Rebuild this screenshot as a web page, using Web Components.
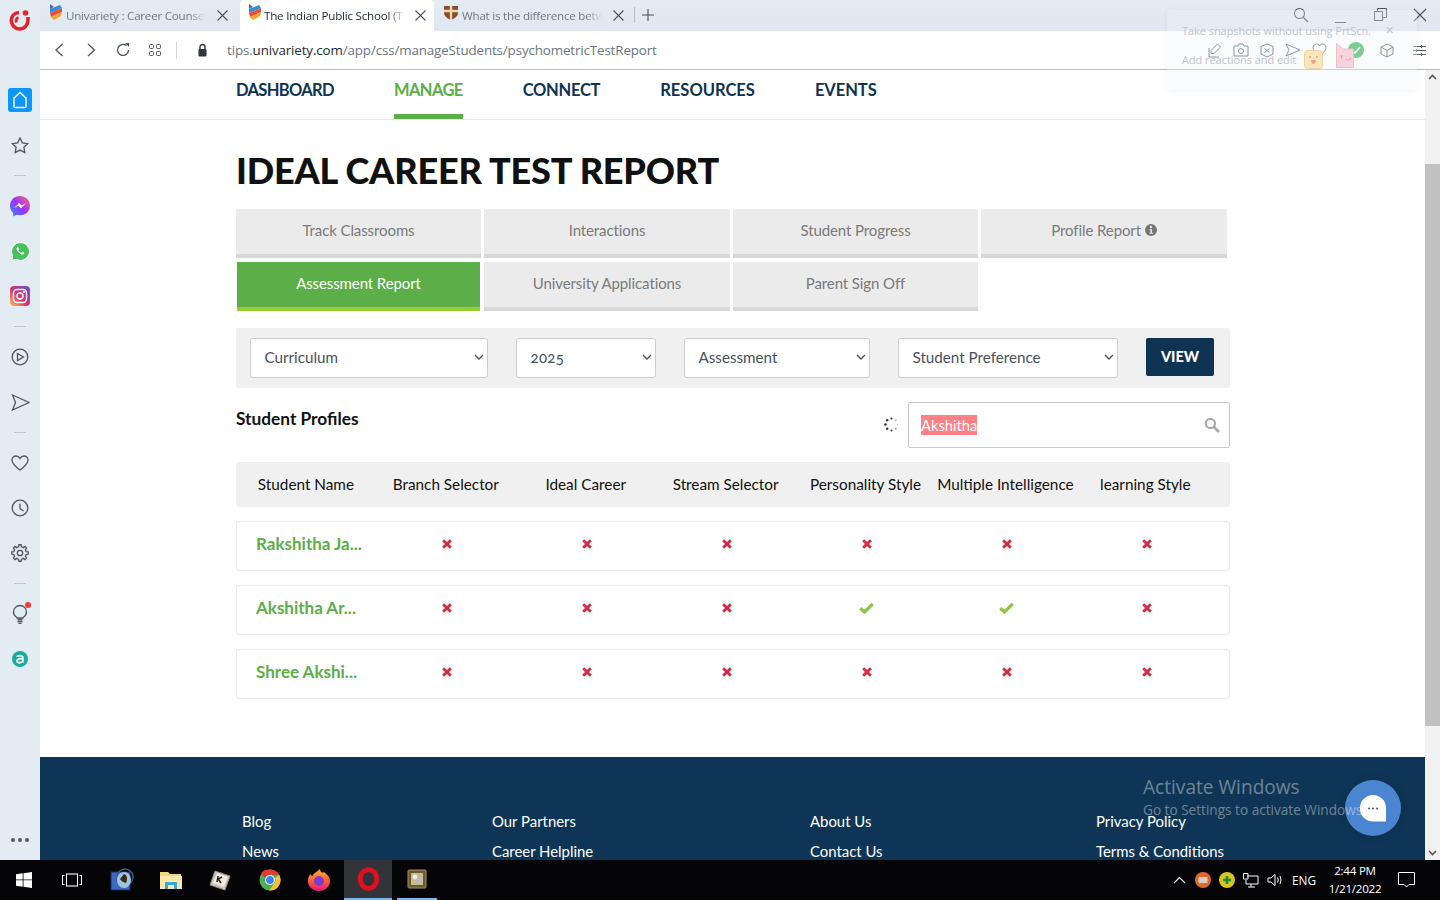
<!DOCTYPE html>
<html lang="en"><head><meta charset="utf-8"><title>Ideal Career Test Report</title>
<style>
html,body{margin:0;padding:0;height:100%;overflow:hidden}
body{font-family:"Lato","Open Sans",sans-serif;background:#e3ebf3}
</style></head><body>
<desk-app></desk-app>
<script>
function def(name, css, html){
  customElements.define(name, class extends HTMLElement{
    constructor(){super();const r=this.attachShadow({mode:'open'});
      r.innerHTML='<style>'+css+'</style>'+(typeof html==='function'?html(this):html);}
  });
}
function gear(cx,cy,ro,ri,n){
  let d='';const st=Math.PI*2/n;
  for(let i=0;i<n;i++){
    const a=i*st-Math.PI/2;
    const p=[[ri,a-st*.5],[ri,a-st*.3],[ro,a-st*.17],[ro,a+st*.17],[ri,a+st*.3]];
    p.forEach((q,j)=>{d+=((i===0&&j===0)?'M':'L')+(cx+q[0]*Math.cos(q[1])).toFixed(2)+' '+(cy+q[0]*Math.sin(q[1])).toFixed(2);});
  }
  return d+'Z';
}
const X='<svg width="10" height="10" viewBox="0 0 10 10"><path d="M1.200 1.200 8.800 8.800M8.800 1.200 1.200 8.800" stroke="#d62a45" stroke-width="2.900" fill="none"/></svg>';
const CHECK='<svg width="15" height="12" viewBox="0 0 15 12"><path d="M1.200 6.200 5.500 10 13.800 1.800" stroke="#8cc63f" stroke-width="3.200" fill="none"/></svg>';
const FAV='<svg width="14" height="16" viewBox="0 0 14 16"><path d="M1 0 5 3 1 5Z" fill="#5a5fb0"/><path d="M1 5 11 1 13 4 1 9Z" fill="#2d8fd5"/><path d="M1 9 13 4 13 8 2 13Z" fill="#ef4b3d"/><path d="M2 13 13 8 12 12 5 16Z" fill="#f5a623"/></svg>';
const SHIELD='<svg width="16" height="15" viewBox="0 0 16 15"><path d="M1 1H15V8Q15 12 8 15 1 12 1 8Z" fill="#8a4b2a"/><path d="M8 1V15M1 6H15" stroke="#e9d9b0" stroke-width="2.400"/></svg>';

def('browser-tab',`
:host{display:flex;align-items:center;height:31px;box-sizing:border-box;width:var(--w,200px);padding:0 var(--pr,12px) 0 var(--pl,8px);gap:var(--g,2px);color:#6f7a85;font:11.600px/31px "Open Sans",sans-serif;letter-spacing:-.22px;position:relative;flex:none}
:host([active]){background:#fff;color:#1f2a36;border-radius:4px 4px 0 0}
.t{flex:1;min-width:0;white-space:nowrap;overflow:hidden;-webkit-mask-image:linear-gradient(90deg,#000 88%,transparent);mask-image:linear-gradient(90deg,#000 88%,transparent)}
svg.c{flex:none;margin-left:8px}
span.i{display:flex;flex:none}
`,`<span class="i"><slot name="icon"></slot></span><span class="t"><slot></slot></span><svg class="c" width="11" height="11" viewBox="0 0 11 11"><path d="M.5.5l10 10M10.500.5l-10 10" stroke="#4a5560" stroke-width="1.100" fill="none"/></svg>`);

def('tab-strip',`
:host{display:flex;align-items:flex-start;height:31px;background:linear-gradient(#e3ebf3,#dfe7f0);position:relative}
.sep{width:1px;height:16px;background:#b5bec8;margin:7px 0 0 0;flex:none}
.plus{margin:9px 0 0 7px;flex:none}
.win{margin-left:auto;display:flex;align-items:center;height:29px}
.win svg{display:block;flex:none}
.s{margin-right:25px}.m{margin-right:27px}.r{margin-right:26px}.x{margin-right:13px}
`,`<browser-tab style="--pl:9px;--g:3px"><span slot="icon">${FAV}</span>Univariety : Career Counsell</browser-tab>
<browser-tab active style="--w:194px;--pr:8px"><span slot="icon">${FAV}</span>The Indian Public School (T</browser-tab>
<browser-tab style="--pr:10px;--pl:9px;--g:3px"><span slot="icon">${SHIELD}</span>What is the difference betw</browser-tab>
<div class="sep"></div>
<svg class="plus" width="12" height="12" viewBox="0 0 12 12"><path d="M6 0V12M0 6H12" stroke="#4a5560" stroke-width="1.100"/></svg>
<div class="win">
<svg class="s" width="16" height="16" viewBox="0 0 16 16"><circle cx="6.500" cy="6.500" r="5" stroke="#4a5560" stroke-width="1.100" fill="none"/><path d="M10 10l5 5" stroke="#4a5560" stroke-width="1.200"/></svg>
<svg class="m" width="13" height="13" viewBox="0 0 13 13" style="margin-top:4px"><path d="M1 12.500H12" stroke="#4a5560"/></svg>
<svg class="r" width="13" height="13" viewBox="0 0 13 13"><path d="M.5 3.500H8.500V12.500H.5ZM3.500 3.500V.5H12.500V9.500H8.500" stroke="#4a5560" fill="none"/></svg>
<svg class="x" width="14" height="14" viewBox="0 0 14 14"><path d="M1 1l12 12M13 1 1 13" stroke="#4a5560" stroke-width="1.100"/></svg>
</div>`);

def('url-bar',`
:host{display:flex;align-items:center;height:39px;box-sizing:border-box;background:#fff;border-bottom:1px solid #b9bdc1;padding-left:13px;position:relative}
svg{display:block;flex:none}
.u{font:13.350px/18px "Open Sans",sans-serif;color:#6a7681;margin:0 0 0 19px;letter-spacing:-.12px;white-space:nowrap}
.u b{font-weight:400;color:#1e2732}
.d{width:1px;height:17px;background:#d0d4d8;margin:0 0 0 14px;flex:none}
.tools{margin-left:auto;display:flex;align-items:center;padding-right:14.500px}
`,`<svg width="12" height="14" viewBox="0 0 12 14"><path d="M9.500 1 3 7l6.500 6" stroke="#4a5560" stroke-width="1.300" fill="none"/></svg>
<svg style="margin-left:20px" width="12" height="14" viewBox="0 0 12 14"><path d="M3 1l6.500 6L3 13" stroke="#4a5560" stroke-width="1.300" fill="none"/></svg>
<svg style="margin-left:18px" width="16" height="16" viewBox="0 0 16 16"><path d="M13.500 8A5.500 5.500 0 1 1 11.500 3.700" stroke="#4a5560" stroke-width="1.300" fill="none"/><path d="M10 1 14 1 14 5Z" fill="#4a5560"/></svg>
<svg style="margin-left:17px" width="14" height="12" viewBox="0 0 14 12"><g fill="none" stroke="#4a5560"><rect x="1.500" y=".5" width="4" height="4" rx="1"/><rect x="8.500" y=".5" width="4" height="4" rx="1"/><rect x="1.500" y="7.500" width="4" height="4" rx="1"/><rect x="8.500" y="7.500" width="4" height="4" rx="1"/></g></svg>
<div class="d"></div>
<svg style="margin-left:20px" width="11" height="14" viewBox="0 0 11 14"><path d="M3 6V4a2.500 2.500 0 0 1 5 0v2" stroke="#2c3540" stroke-width="1.400" fill="none"/><rect x="1.500" y="6" width="8" height="7.500" rx="1" fill="#2c3540"/></svg>
<div class="u">tips.<b>univariety.com</b>/app/css/manageStudents/psychometricTestReport</div>
<div class="tools">
<svg width="14" height="15" viewBox="0 0 14 15"><g fill="none" stroke="#5a6570"><path d="M1 5V14H11"/><path d="M9.500 1l3 3L6 10.500H3V7.500Z"/></g></svg>
<svg width="16" height="14" viewBox="0 0 16 14" style="margin-left:11px"><g fill="none" stroke="#5a6570"><path d="M1 3H5L6 1H10L11 3H15V13H1Z"/><circle cx="8" cy="8" r="2.500"/></g></svg>
<svg width="14" height="15" viewBox="0 0 14 15" style="margin-left:11px"><g fill="none" stroke="#5a6570"><path d="M7 1 13 3.500V11L7 14 1 11V3.500Z"/><path d="M4.500 5.500l5 4M9.500 5.500l-5 4"/></g></svg>
<svg width="16" height="14" viewBox="0 0 16 14" style="margin-left:11px"><path d="M1 1 15 7 1 13 4 7Z" fill="none" stroke="#5a6570"/></svg>
<svg width="15" height="14" viewBox="0 0 15 14" style="margin-left:10.500px"><path d="M7.500 13C3 9.500 1 7 1 4.500 1 2 3 1 4.300 1 6 1 7 2 7.500 3 8 2 9 1 10.700 1 12 1 14 2 14 4.500 14 7 12 9.500 7.500 13Z" fill="none" stroke="#5a6570"/></svg>
<svg width="16" height="16" viewBox="0 0 16 16" style="margin-left:21.500px"><circle cx="8" cy="8" r="8" fill="#3cba54"/><path d="M4 8l3 3 5-6" stroke="#fff" stroke-width="1.600" fill="none"/></svg>
<svg width="14" height="15" viewBox="0 0 14 15" style="margin-left:16px"><g fill="none" stroke="#5a6570"><path d="M7 1 13 4V11L7 14 1 11V4Z"/><path d="M1 4 7 7.500 13 4M7 7.500V14"/></g></svg>
<svg width="13" height="11" viewBox="0 0 13 11" style="margin-left:18.500px"><path d="M0 1.500H13M0 5.500H13M0 9.500H13" stroke="#5a6570"/><path d="M8.500 0V3M3.500 4V7M8.500 8V11" stroke="#5a6570"/></svg>
</div>`);

const sb=(b)=>`<div class="n">${b}</div>`;
const ST='fill="none" stroke="#4d5762" stroke-width="1.300"';
def('side-bar',`
:host{display:flex;flex-direction:column;align-items:center;width:40px;background:#e3ebf3;height:100%;position:relative}
.n{height:45px;display:flex;align-items:center;justify-content:center;width:40px;flex:none;position:relative}
.logo{height:40px;margin-bottom:48px;display:flex;align-items:center;justify-content:center;flex:none}
.h{width:24px;height:24px;background:#0d97fb;border-radius:3px;display:flex;align-items:center;justify-content:center;flex:none}
hr{width:12px;height:1px;background:#bcc6d0;border:0;margin:7.500px 0;flex:none}
.sp{flex:1}
.dots{height:20px;margin-bottom:10px;display:flex;gap:3px;align-items:center}
.dots i{width:4px;height:4px;border-radius:50%;background:#4d5762}
svg{display:block}
`,`<div class="logo"><svg width="22" height="22" viewBox="0 0 22 22"><path d="M10 3.500C5 4 2.300 7.500 2.300 11.500c0 4.800 3.700 8.500 8.200 8.500 4.800 0 8.500-4 8.500-9V8" fill="none" stroke="#e8212c" stroke-width="3.600"/><path d="M9.500 8.500C7.500 9 6.800 11 7.300 13.500" fill="none" stroke="#e8212c" stroke-width="2.800"/><circle cx="16.500" cy="4" r="2.800" fill="#e8212c"/></svg></div>
<div class="h"><svg width="16" height="18" viewBox="0 0 16 18"><path d="M2 7 8 1.500 14 7V15.500Q14 16.500 13 16.500H3Q2 16.500 2 15.500Z" fill="none" stroke="#fff" stroke-width="1.400"/></svg></div>
<div class="n" style="margin-top:10.500px"><svg width="18" height="17" viewBox="0 0 18 17"><path d="M9 1l2.400 4.800 5.300.8-3.800 3.700.9 5.300L9 13.100l-4.800 2.500.9-5.300L1.300 6.600l5.300-.8Z" ${ST}/></svg></div>
<hr>
${sb(`<svg width="20" height="21" viewBox="0 0 20 21"><defs><linearGradient id="ms" x1="0" y1="1" x2="1" y2="0"><stop offset="0" stop-color="#1f8cff"/><stop offset=".5" stop-color="#a033ff"/><stop offset="1" stop-color="#ff6968"/></linearGradient></defs><path d="M10 0C4.400 0 0 4.100 0 9.700c0 2.900 1.200 5.400 3.200 7.200V20.500l3.300-1.800c1.100.3 2.300.5 3.500.5 5.600 0 10-4.100 10-9.500S15.600 0 10 0Z" fill="url(#ms)"/><path d="M4 12 9 7l2.800 2.400L16 7l-5 5.200-2.700-2.400Z" fill="#fff"/></svg>`)}
${sb(`<svg width="19" height="19" viewBox="0 0 18 18"><path d="M9 .5A8.500 8.500 0 0 0 1.700 13.300L.5 17.500l4.300-1.100A8.500 8.500 0 1 0 9 .5Z" fill="#43c35a" stroke="#fff"/><path d="M6 4.500c-1.300 1-1 3 .8 5s4 3.200 5.300 1.900l.3-1.100-2-1-.9.900c-1-.4-2-1.400-2.500-2.500l.8-.9-1-2Z" fill="#fff"/></svg>`)}
${sb(`<svg width="20" height="20" viewBox="0 0 20 20"><defs><linearGradient id="ig" x1="0" y1="1" x2="1" y2="0"><stop offset="0" stop-color="#fdc468"/><stop offset=".45" stop-color="#e1306c"/><stop offset="1" stop-color="#5851db"/></linearGradient></defs><rect width="20" height="20" rx="4" fill="url(#ig)"/><rect x="3.500" y="3.500" width="13" height="13" rx="3.500" fill="none" stroke="#fff" stroke-width="1.400"/><circle cx="10" cy="10" r="3" fill="none" stroke="#fff" stroke-width="1.400"/><circle cx="14" cy="6" r="1" fill="#fff"/></svg>`)}
<hr>
${sb(`<svg width="18" height="18" viewBox="0 0 18 18"><circle cx="9" cy="9" r="7.800" ${ST}/><path d="M6.500 5.500 12.500 9 6.500 12.500Z" ${ST}/></svg>`)}
${sb(`<svg width="19" height="17" viewBox="0 0 19 17"><path d="M1.500 1 18 8.500 1.500 16 4.500 8.500Z" ${ST}/></svg>`)}
<hr>
${sb(`<svg width="18" height="16" viewBox="0 0 18 16"><path d="M9 15C3.500 11 1 8 1 5 1 2.500 3 1 5 1 7 1 8.300 2.200 9 3.500 9.700 2.200 11 1 13 1 15 1 17 2.500 17 5 17 8 14.500 11 9 15Z" ${ST}/></svg>`)}
${sb(`<svg width="18" height="18" viewBox="0 0 18 18"><circle cx="9" cy="9" r="7.800" ${ST}/><path d="M9 4.500V9.500L12.500 12" ${ST}/></svg>`)}
${sb(`<svg width="18" height="18" viewBox="0 0 18 18"><path d="${gear(9,9,8.300,6.300,8)}" ${ST}/><circle cx="9" cy="9" r="2.700" ${ST}/></svg>`)}
<hr>
<div class="n"><svg width="16" height="20" viewBox="0 0 16 20"><path d="M5 13.500C3 12.300 1.500 10.500 1.500 8 1.500 4.400 4.400 1.500 8 1.500S14.500 4.400 14.500 8c0 2.500-1.500 4.300-3.500 5.500V14H5Z" ${ST}/><path d="M5.500 15.500h5M5.500 17.500h5M6.500 19.300h3" ${ST}/></svg><svg style="position:absolute;left:25px;top:10.500px" width="6" height="6" viewBox="0 0 6 6"><circle cx="3" cy="3" r="3" fill="#f53a32"/></svg></div>
${sb(`<svg width="16" height="16" viewBox="0 0 16 16"><circle cx="8" cy="8" r="8" fill="#17ad9c"/><path d="M5 5.800C5.500 4.500 10.500 4 10.800 6.500V11.800M10.800 8C8.500 7.400 5 7.900 5 10 5 12.600 10 12 10.800 10" fill="none" stroke="#fff" stroke-width="1.800"/></svg>`)}
<div class="sp"></div>
<div class="dots"><i></i><i></i><i></i></div>`);

def('main-nav',`
:host{display:flex;gap:60px;padding-left:196px;height:50px;box-sizing:border-box;border-bottom:1px solid #e9e9e9;flex:none;background:#fff}
a{font:700 16.500px/40px Lato,sans-serif;color:#0e3353;box-sizing:border-box;height:49px;display:block;letter-spacing:var(--ls,-.55px);text-decoration:none}
a.on{color:#5bae48;border-bottom:5px solid #5bae48}
`,`<a style="--ls:-.66px">DASHBOARD</a><a class="on" style="--ls:-.6px">MANAGE</a><a style="--ls:-.27px">CONNECT</a><a style="--ls:0px">RESOURCES</a><a style="--ls:-.05px">EVENTS</a>`);

def('report-tab',`
:host{display:flex;align-items:center;justify-content:center;height:49px;box-sizing:border-box;padding-bottom:3px;background:#ebebeb;border-bottom:4px solid #d9d7d7;color:#7a7a7a;font:15px Lato,sans-serif;letter-spacing:-.1px}
:host([active]){background:#5bae48;border-bottom-color:#99cb38;color:#fff;margin:0 1px}
`,`<slot></slot>`);

def('tab-grid',`
:host{display:grid;grid-template-columns:245px 246px 245px 246px;column-gap:3px;row-gap:4px}
`,`<report-tab>Track Classrooms</report-tab><report-tab>Interactions</report-tab><report-tab>Student Progress</report-tab><report-tab>Profile Report&nbsp;<svg width="12" height="12" viewBox="0 0 12 12"><circle cx="6" cy="6" r="6" fill="#777"/><circle cx="6" cy="3" r="1.200" fill="#ebebeb"/><path d="M4.500 5.200H7V8.800H8V9.800H4.500V8.800H5.500V6.200H4.500Z" fill="#ebebeb"/></svg></report-tab>
<report-tab active>Assessment Report</report-tab><report-tab>University Applications</report-tab><report-tab>Parent Sign Off</report-tab>`);

def('pick-box',`
:host{display:flex;align-items:center;height:40px;box-sizing:border-box;background:#fff;border:1px solid #ccc;border-radius:3px;padding:0 3px 2px 13.500px;font:15.200px Lato,sans-serif;color:#49505a;flex:none;width:var(--w)}
span{flex:1}
:host([alt]) span{font-feature-settings:"onum";font-size:15px;letter-spacing:.3px}
svg{flex:none}
`,`<span><slot></slot></span><svg width="10" height="6" viewBox="0 0 10 6"><path d="M1 1l4 4 4-4" stroke="#555" stroke-width="1.400" fill="none"/></svg>`);

def('filter-bar',`
:host{display:flex;align-items:flex-start;height:60px;box-sizing:border-box;padding:10px 14px;gap:28px;background:#f0f0f0;border-radius:3px;margin-top:17px}
button{all:unset;width:68px;height:38px;background:#0e3353;color:#fff;border-radius:2px;text-align:center;font:900 14.500px/36px Lato,sans-serif}
`,`<pick-box style="--w:238px">Curriculum</pick-box><pick-box alt style="--w:140px">2025</pick-box><pick-box style="--w:186px">Assessment</pick-box><pick-box style="--w:220px">Student Preference</pick-box><button>VIEW</button>`);

def('search-row',`
:host{display:flex;align-items:flex-start;margin-top:14px;height:46px}
h2{font:700 17.300px/34px Lato,sans-serif;color:#111;margin:0;flex:1}
.sp{margin:15px 9px 0 0;display:block;flex:none}
.box{width:322px;height:46px;box-sizing:border-box;border:1px solid #c9c9c9;border-radius:2px;display:flex;align-items:center;padding:0 9px 0 12px;background:#fff;flex:none}
mark{background:#ff8085;color:#fff;font:14.700px/20px Lato,sans-serif;flex:none}
.g{flex:1}
`,`<h2>Student Profiles</h2>
<svg class="sp" width="15" height="15" viewBox="0 0 15 15"><g fill="#333"><circle cx="7.500" cy="1.500" r="1.100"/><circle cx="11.800" cy="3.200" r=".8" fill="#888"/><circle cx="13.500" cy="7.500" r=".6" fill="#aaa"/><circle cx="11.800" cy="11.800" r=".8" fill="#777"/><circle cx="7.500" cy="13.500" r="1"/><circle cx="3.200" cy="11.800" r="1.200"/><circle cx="1.500" cy="7.500" r="1.300"/><circle cx="3.200" cy="3.200" r="1.200"/></g></svg>
<div class="box"><mark>Akshitha</mark><span class="g"></span><svg width="16" height="16" viewBox="0 0 15 15"><circle cx="6" cy="6" r="4.300" stroke="#a9a9a9" stroke-width="2" fill="none"/><path d="M9.500 9.500 14 14" stroke="#a9a9a9" stroke-width="2.600"/></svg></div>`);

def('table-head',`
:host{display:grid;grid-template-columns:repeat(7,139.900px);height:45px;box-sizing:border-box;padding-bottom:2px;align-items:center;background:#f0f0f0;border-radius:3px;font:15.300px Lato,sans-serif;color:#111;text-align:center;margin-top:14px;white-space:nowrap}
`,`<div>Student Name</div><div>Branch Selector</div><div>Ideal Career</div><div>Stream Selector</div><div>Personality Style</div><div>Multiple Intelligence</div><div>learning Style</div>`);

def('student-row',`
:host{display:grid;grid-template-columns:repeat(7,140px);height:50px;box-sizing:border-box;padding-bottom:4px;align-items:center;border:1px solid #ebebeb;border-radius:3px;margin-top:14px;background:#fff}
.n{font:700 17px Lato,sans-serif;color:#5bae48;padding:0 0 2px 19px;white-space:nowrap}
.c{display:flex;justify-content:center;padding-right:1px}
`,(el)=>{const marks=(el.getAttribute('marks')||'').split('');
  return `<div class="n">${el.getAttribute('name')}</div>`+marks.map(m=>`<div class="c">${m==='1'?CHECK:X}</div>`).join('');});

def('site-footer',`
:host{display:block;background:#0f3556;flex:none;height:200px;margin-top:58px;position:relative;color:#fff;font:14.900px Lato,sans-serif}
.g{display:flex;padding:49px 0 0 202px}
.c{display:flex;flex-direction:column;line-height:30px;white-space:nowrap}
`,`<div class="g"><div class="c" style="width:250px"><span>Blog</span><span>News</span></div><div class="c" style="width:318px"><span>Our Partners</span><span>Career Helpline</span></div><div class="c" style="width:286px"><span>About Us</span><span>Contact Us</span></div><div class="c"><span>Privacy Policy</span><span>Terms &amp; Conditions</span></div></div>`);

def('page-view',`
:host{display:flex;flex:1;min-height:0;background:#fff;position:relative}
.s{flex:1;min-width:0;overflow:hidden;display:flex;flex-direction:column}
.w{width:994px;margin-left:196px;flex:none}
h1{font:900 36.100px/44px Lato,sans-serif;color:#111;margin:28px 0 17px;letter-spacing:-.2px}
.bar{width:15px;flex:none;background:#f1f1f1;position:relative;display:flex;flex-direction:column;justify-content:space-between;align-items:center;padding:4px 0;box-sizing:border-box}
.th{position:absolute;left:0;right:0;top:94px;height:562px;background:#c1c1c1}
`,`<div class="s"><main-nav></main-nav><div class="w"><h1>IDEAL CAREER TEST REPORT</h1><tab-grid></tab-grid><filter-bar></filter-bar><search-row></search-row><table-head></table-head>
<student-row name="Rakshitha Ja..." marks="000000"></student-row><student-row name="Akshitha Ar..." marks="000110"></student-row><student-row name="Shree Akshi..." marks="000000"></student-row></div><site-footer></site-footer></div>
<div class="bar"><svg width="9" height="6" viewBox="0 0 9 6"><path d="M1 5l3.500-3.500L8 5" stroke="#555" stroke-width="1.600" fill="none"/></svg><div class="th"></div><svg width="9" height="6" viewBox="0 0 9 6"><path d="M1 1l3.500 3.500L8 1" stroke="#555" stroke-width="1.600" fill="none"/></svg></div>`);

def('chat-bubble',`
:host{position:absolute;left:1345px;top:780px;width:56px;height:56px;border-radius:50%;background:#4a86cf;display:flex;align-items:center;justify-content:center;box-shadow:0 0 10px rgba(0,0,0,.15)}
`,`<svg width="26" height="27" viewBox="0 0 26 27" style="margin-top:1px"><path d="M13 0A13 13 0 0 0 0 13 13 13 0 0 0 13 26.500H26V13A13 13 0 0 0 13 0Z" fill="#fff"/><g fill="#4a6a90"><circle cx="9" cy="13.500" r="1.100"/><circle cx="13" cy="13.500" r="1.100"/><circle cx="17" cy="13.500" r="1.100"/></g></svg>`);

def('snap-popup',`
:host{position:absolute;left:1167px;top:10px;width:250px;height:80px;background:rgba(240,244,248,.35);border-radius:4px;box-shadow:0 1px 6px rgba(0,0,0,.05);font:10.900px "Open Sans",sans-serif;color:#bfc4ca}
.a{position:absolute;left:15px;top:13px;white-space:nowrap}
.x{position:absolute;left:218px;top:12px}
.b{position:absolute;left:15px;top:42px;white-space:nowrap}
.f{position:absolute;left:137px;top:40px;display:block}
.p{left:169px;top:33px}
`,`<div class="a">Take snapshots without using PrtScn.</div><div class="x">✕</div><div class="b">Add reactions and edit</div>
<svg class="f" width="19" height="19" viewBox="0 0 19 19"><rect x=".5" y=".5" width="18" height="18" rx="3" fill="#fbe5bd" stroke="#efd19f"/><circle cx="6" cy="7" r="1" fill="#d9a86a"/><circle cx="13" cy="7" r="1" fill="#d9a86a"/><path d="M7 10H12Q11.500 14 9.500 14T7 10Z" fill="#ee9f86"/></svg>
<svg class="f p" width="18" height="25" viewBox="0 0 18 25"><path d="M.5.5 7 6H17.500V24.500H.5Z" fill="#f9d3dc" stroke="#f2bccb"/><path d="M4 13H7M5.500 13V16M10 16Q12.500 19 15 15" stroke="#e79ab0" fill="none"/></svg>`);

def('activate-mark',`
:host{position:absolute;left:1143px;top:774px;color:rgba(255,255,255,.4);font-family:"Open Sans",sans-serif;pointer-events:none;white-space:nowrap}
.a{font-size:19.100px;line-height:26px}
.b{font-size:13.600px;line-height:20px}
`,`<div class="a">Activate Windows</div><div class="b">Go to Settings to activate Windows.</div>`);

def('task-bar',`
:host{display:flex;align-items:center;height:40px;background:#050508;color:#fff;font:12px "Open Sans",sans-serif;flex:none;position:relative}
.b{width:48px;height:40px;display:flex;align-items:center;justify-content:center;flex:none;box-sizing:border-box}
svg{display:block;flex:none}
.on{background:#33343a;border-bottom:2px solid #76b9ed}
.run{width:40px;border-bottom:2px solid #76b9ed}
.tray{margin-left:auto;display:flex;align-items:center;height:40px}
.clk{width:76px;text-align:center;line-height:18px;font-size:11.600px;letter-spacing:-.25px}
.en{font-size:11.800px;margin:0 1px 0 9px}
`,`<div class="b"><svg width="16" height="16" viewBox="0 0 16 16"><path d="M0 2.300 6.700 1.300V7.500H0ZM7.500 1.200 16 0V7.500H7.500ZM0 8.300H6.700V14.700L0 13.700ZM7.500 8.300H16V16L7.500 14.800Z" fill="#fff"/></svg></div>
<div class="b"><svg width="20" height="14" viewBox="0 0 20 14"><g fill="none" stroke="#fff" stroke-width="1.100"><rect x="4.500" y="1" width="11" height="12"/><path d="M2.500 2.500H.5V11.500H2.500M17.500 2.500H19.500V11.500H17.500"/></g></svg></div>
<div class="b" style="margin-left:2px"><svg width="24" height="24" viewBox="0 0 24 24"><rect x="1" y="4" width="19" height="18" fill="#3f69c0" stroke="#1b2a66"/><circle cx="15" cy="9" r="8" fill="none" stroke="#345c88" stroke-width="1.500"/><ellipse cx="14" cy="12" rx="7" ry="8" fill="#9fc6dc"/><path d="M14 6c3 1 4 5 2 9-3-1-5-2-6-4Z" fill="#3a2a1a"/></svg></div>
<div class="b" style="margin-left:1px"><svg width="22" height="20" viewBox="0 0 22 20"><path d="M0 2H8L10 4H21V19H0Z" fill="#f6d77c"/><path d="M0 6H22V19H0Z" fill="#fbe9a9"/><path d="M5 19V12H17V19H14V15H8V19Z" fill="#36a8e0"/></svg></div>
<div class="b" style="margin-left:1px"><svg width="24" height="24" viewBox="0 0 24 24"><path d="M7 3 22 8 17 22 2 17Z" fill="#cfc7bb" stroke="#8f877a"/><path d="M9 5 20 9 16 19 5 15Z" fill="#efe9de"/><path d="M10 8 9 14M14 9 10.200 11 13 15" stroke="#222" stroke-width="1.500" fill="none"/></svg></div>
<div class="b" style="margin-left:2px"><svg width="22" height="22" viewBox="0 0 22 22"><circle cx="11" cy="11" r="10.500" fill="#4caf50"/><path d="M11 .5A10.500 10.500 0 0 1 20.100 5.800H11A5.300 5.300 0 0 0 6.200 8.900L2 3.900A10.500 10.500 0 0 1 11 .5Z" fill="#e33b2e"/><path d="M20.100 5.800A10.500 10.500 0 0 1 10.200 21.500L14.900 14.700A5.300 5.300 0 0 0 16 9Z" fill="#fbc02d"/><circle cx="11" cy="11" r="5" fill="#fff"/><circle cx="11" cy="11" r="3.900" fill="#3e82f1"/></svg></div>
<div class="b" style="margin-left:1px"><svg width="24" height="24" viewBox="0 0 24 24"><defs><linearGradient id="ff" x1="0" y1="0" x2="0" y2="1"><stop offset="0" stop-color="#ffb02e"/><stop offset=".6" stop-color="#ff5634"/><stop offset="1" stop-color="#e31587"/></linearGradient></defs><path d="M12 23C5.500 23 1 18.500 1 13 1 10 2 7.500 3.500 6 4 7.500 5 8 5.500 8 6.500 5 10 4 13 1 13 4 15 5.500 17 4 21 7 23 10 23 13 23 18.500 18.500 23 12 23Z" fill="url(#ff)"/><circle cx="12" cy="13" r="5" fill="#7d3bcf"/></svg></div>
<div class="b on" style="margin-left:1px"><svg width="23" height="24" viewBox="0 0 24 24"><ellipse cx="12" cy="12" rx="8.700" ry="9.700" fill="none" stroke="#e0101e" stroke-width="5"/></svg></div>
<div class="b run" style="margin-left:5px"><svg width="22" height="22" viewBox="0 0 22 22"><rect x="2" y="2" width="18" height="18" rx="1" fill="#6b5b32" stroke="#a68f52"/><rect x="5" y="5" width="12" height="12" fill="#c9bb8c"/><circle cx="9" cy="9" r="2.400" fill="#eee"/><circle cx="13" cy="13" r="3" fill="#bbb"/></svg></div>
<div class="tray">
<svg width="13" height="8" viewBox="0 0 13 8"><path d="M1 7l5.500-5.500L12 7" stroke="#fff" stroke-width="1.100" fill="none"/></svg>
<svg style="margin-left:9px" width="16" height="16" viewBox="0 0 16 16"><circle cx="8" cy="8" r="8" fill="#e0682a"/><rect x="3.500" y="5" width="9" height="6" rx="1" fill="#d9d0c3"/></svg>
<svg style="margin-left:8px" width="16" height="16" viewBox="0 0 16 16"><circle cx="8" cy="8" r="8" fill="#d6c521"/><path d="M8 4V12M4 8H12" stroke="#1d8a2c" stroke-width="2.400"/></svg>
<svg style="margin-left:8px" width="16" height="15" viewBox="0 0 16 15"><path d="M4 3H15V11H3V7M8 11V14M5 14H12M.5.5H5V6H.5Z" fill="none" stroke="#fff"/></svg>
<svg style="margin-left:8px" width="16" height="14" viewBox="0 0 16 14"><path d="M1 5H4L8 1.500V12.500L4 9H1ZM10.500 4.500Q12 7 10.500 9.500M13 3Q15 7 13 11" fill="none" stroke="#fff"/></svg>
<span class="en">ENG</span>
<div class="clk">2:44 PM<br>1/21/2022</div>
<svg style="margin:0 25px 0 5px" width="17" height="16" viewBox="0 0 17 16"><path d="M.5.5H16.500V12.500H11L8.500 15 6 12.500H.5Z" fill="none" stroke="#fff"/></svg>
</div>`);

def('desk-app',`
:host{display:flex;flex-direction:column;width:1440px;height:900px;overflow:hidden;position:relative}
.win{display:grid;grid-template-columns:40px 1fr;grid-template-rows:31px 39px 1fr;flex:1;min-height:0;background:#e3ebf3}
side-bar{grid-row:1/4}
.p{grid-column:2;min-height:0;display:flex}
`,`<div class="win"><side-bar></side-bar><tab-strip></tab-strip><url-bar></url-bar><div class="p"><page-view></page-view></div></div><task-bar></task-bar><chat-bubble></chat-bubble><activate-mark></activate-mark><snap-popup></snap-popup>`);
</script>
</body></html>
